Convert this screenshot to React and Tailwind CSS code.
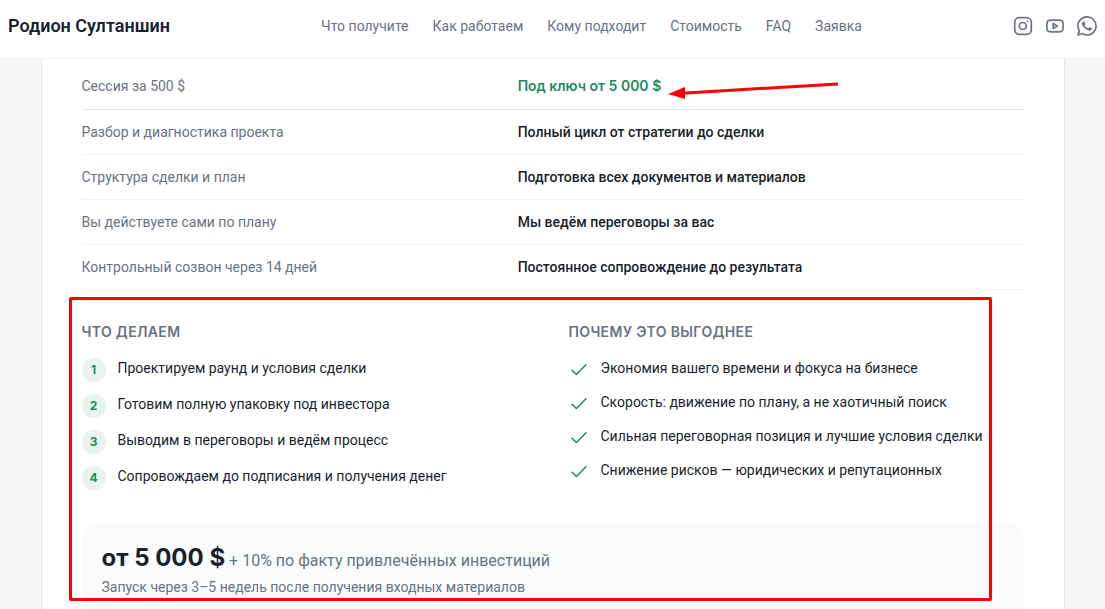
import { BsWhatsapp } from 'react-icons/bs';

const navLinks = [
  { href: '#benefits', label: 'Что получите' },
  { href: '#process', label: 'Как работаем' },
  { href: '#audience', label: 'Кому подходит' },
  { href: '#pricing', label: 'Стоимость' },
  { href: '#faq', label: 'FAQ' },
  { href: '#request', label: 'Заявка' },
];

const compareRows = [
  ['Разбор и диагностика проекта', 'Полный цикл от стратегии до сделки'],
  ['Структура сделки и план', 'Подготовка всех документов и материалов'],
  ['Вы действуете сами по плану', 'Мы ведём переговоры за вас'],
  ['Контрольный созвон через 14 дней', 'Постоянное сопровождение до результата'],
];

const steps = [
  'Проектируем раунд и условия сделки',
  'Готовим полную упаковку под инвестора',
  'Выводим в переговоры и ведём процесс',
  'Сопровождаем до подписания и получения денег',
];

const advantages = [
  'Экономия вашего времени и фокуса на бизнесе',
  'Скорость: движение по плану, а не хаотичный поиск',
  'Сильная переговорная позиция и лучшие условия сделки',
  'Снижение рисков — юридических и репутационных',
];

function InstagramIcon() {
  return (
    <svg viewBox="0 0 20 20" className="h-5 w-5" fill="none" stroke="currentColor" strokeWidth="1.7" aria-hidden="true">
      <rect x="1.7" y="1.7" width="16.6" height="16.6" rx="4.4" />
      <circle cx="9.8" cy="10" r="3.5" />
      <circle cx="14.5" cy="5.4" r="0.9" fill="currentColor" stroke="none" />
    </svg>
  );
}

function YoutubeIcon() {
  return (
    <svg viewBox="0 0 20 20" className="h-5 w-5" fill="none" stroke="currentColor" strokeWidth="1.7" strokeLinejoin="round" aria-hidden="true">
      <path d="M4.2 4.4Q10 3.7 15.8 4.4Q17.6 4.6 17.9 6.3Q18.5 10 17.9 13.7Q17.6 15.4 15.8 15.6Q10 16.3 4.2 15.6Q2.4 15.4 2.1 13.7Q1.5 10 2.1 6.3Q2.4 4.6 4.2 4.4Z" />
      <path d="M8.2 7.5L12.2 10L8.2 12.5Z" />
    </svg>
  );
}

function CheckIcon() {
  return (
    <svg viewBox="0 0 20 20" className="mt-0.5 h-5 w-5 shrink-0 text-[#1f8a5f]" fill="none" stroke="currentColor" strokeWidth="1.5" strokeLinecap="round" strokeLinejoin="round" aria-hidden="true">
      <path d="M3 10.3L7.4 14.5L17 4.8" />
    </svg>
  );
}

function Arrow() {
  return (
    <svg viewBox="0 0 172 20" className="absolute top-[15px] left-[149px] h-5 w-[172px]" aria-hidden="true">
      <path d="M15 14.2L171 5" stroke="#ff0000" strokeWidth="3" />
      <path d="M1 15L18 8V20Z" fill="#ff0000" />
    </svg>
  );
}

function Header() {
  return (
    <header className="sticky top-0 z-10 flex h-[59px] items-center justify-between border-b border-[#f1f2f3] bg-white px-2 pb-1.5">
      <a href="#top" className="text-lg font-semibold text-[#1a1f2b]">Родион Султаншин</a>
      <nav className="flex gap-6 text-sm text-[#6b7280]">
        {navLinks.map(link => <a key={link.href} href={link.href}>{link.label}</a>)}
      </nav>
      <div className="flex gap-3 text-[#6b7280]">
        <a href="#instagram" aria-label="Instagram"><InstagramIcon /></a>
        <a href="#youtube" aria-label="YouTube"><YoutubeIcon /></a>
        <a href="#whatsapp" aria-label="WhatsApp"><BsWhatsapp className="h-5 w-5" /></a>
      </div>
    </header>
  );
}

export default function App() {
  return (
    <div className="min-h-screen bg-[#f5f8f7] font-[Roboto,'Noto_Sans',sans-serif] text-[#1a1f2b]">
      <Header />
      <main className="mx-auto max-w-5xl border-x border-[#e5e7eb] bg-white px-10 pt-[5px] pb-10">
        <table className="w-full text-left text-sm">
          <thead>
            <tr className="h-[45px] border-b border-[#e5e7eb]">
              <th className="w-[46.3%] font-normal text-[#6b7280]">Сессия за 500 $</th>
              <th className="relative font-[Inter,sans-serif] font-semibold text-[#1f8a5f]">Под ключ от 5 000 $<Arrow /></th>
            </tr>
          </thead>
          <tbody>
            {compareRows.map(([session, turnkey]) => (
              <tr key={session} className="h-[45px] border-b border-[#f3f4f6]">
                <td className="text-[#6b7280]">{session}</td>
                <td className="font-medium">{turnkey}</td>
              </tr>
            ))}
          </tbody>
        </table>

        <div className="relative pt-8">
          <div className="grid grid-cols-2 gap-8 text-sm">
            <section>
              <h3 className="mb-4 font-[Inter,sans-serif] font-semibold uppercase tracking-wide text-[#6b7280]">Что делаем</h3>
              <ol className="space-y-3">
                {steps.map((step, i) => (
                  <li key={step} className="flex items-start gap-3">
                    <span className="flex h-6 w-6 shrink-0 items-center justify-center rounded-full bg-[#e8f3ef] font-[Inter,sans-serif] text-xs font-bold text-[#1f8a5f]">{i + 1}</span>
                    {step}
                  </li>
                ))}
              </ol>
            </section>
            <section>
              <h3 className="mb-4 font-[Inter,sans-serif] font-semibold uppercase tracking-wide text-[#6b7280]">Почему это выгоднее</h3>
              <ul className="space-y-3">
                {advantages.map(item => (
                  <li key={item} className="flex items-start gap-3 whitespace-nowrap"><CheckIcon />{item}</li>
                ))}
              </ul>
            </section>
          </div>

          <div className="mt-8 rounded-2xl bg-[#fafcfb] p-5">
            <p className="leading-8 text-[#6b7280]">
              <span className="font-[Inter,sans-serif] text-2xl leading-8 font-bold text-[#1a1f2b]">от 5 000 $</span> + 10% по факту привлечённых инвестиций
            </p>
            <p className="text-sm text-[#6b7280]">Запуск через 3–5 недель после получения входных материалов</p>
          </div>

          <div className="pointer-events-none absolute top-[7px] right-8 -left-[13px] h-[304px] rounded-xs border-3 border-[#ff0000]" />
        </div>
      </main>
    </div>
  );
}
